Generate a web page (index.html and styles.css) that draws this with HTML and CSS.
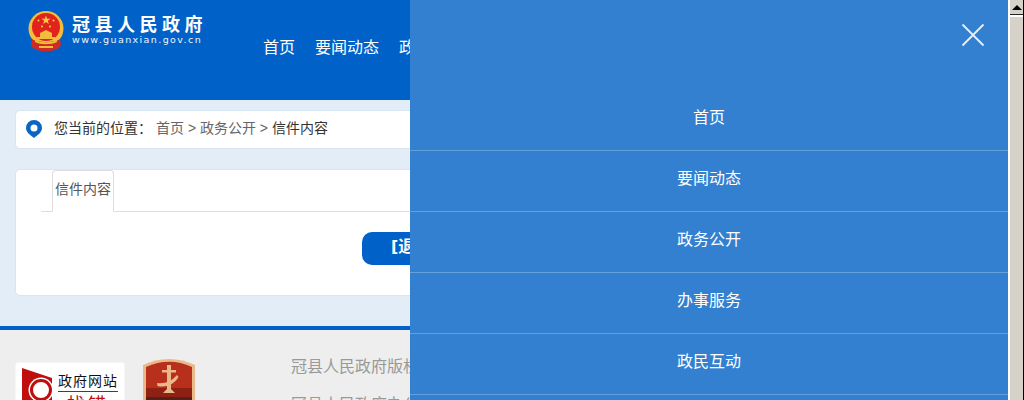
FILE: index.html
```html
<!DOCTYPE html>
<html lang="zh-CN">
<head>
	<meta charset="UTF-8">
	<title>冠县人民政府</title>
	<link rel="stylesheet" href="styles.css">
</head>
<body>
	<div class="page">
		<div class="header">
			<div class="logo">
				<svg class="emblem" width="36" height="40" viewBox="0 0 36 40">
					<circle cx="18" cy="17.5" r="17.5" fill="#f2bd3c"/>
					<circle cx="18" cy="16" r="14" fill="#e0241d"/>
					<path d="M18 4.5l1.1 3.3h3.5l-2.8 2 1 3.3-2.8-2-2.8 2 1-3.3-2.8-2h3.5z" fill="#f7cf4a"/>
					<circle cx="10.5" cy="9.5" r="1" fill="#f7cf4a"/>
					<circle cx="25.5" cy="9.5" r="1" fill="#f7cf4a"/>
					<circle cx="14" cy="15.5" r="1" fill="#f7cf4a"/>
					<circle cx="22" cy="15.5" r="1" fill="#f7cf4a"/>
					<path d="M9 26h18v2H9zM12 22l6-3 6 3v4H12z" fill="#f2bd3c"/>
					<path d="M4 28c4 4 24 4 28 0l1 6c-2 4-7 6-15 6S5 38 3 34z" fill="#cf2a24"/>
					<path d="M7 29c6 3 16 3 22 0v2c-6 3-16 3-22 0zM11 35h14v2H11z" fill="#f2bd3c"/>
				</svg>
				<div class="logo-text">
					<div class="logo-name">冠县人民政府</div>
					<div class="logo-url">www.guanxian.gov.cn</div>
				</div>
			</div>
			<ul class="nav">
				<li>首页</li>
				<li>要闻动态</li>
				<li>政务公开</li>
			</ul>
		</div>

		<div class="main">
			<div class="crumb">
				<svg class="pin" width="16" height="18" viewBox="0 0 16 18">
					<path fill-rule="evenodd" d="M8 0a8 8 0 0 1 8 8c0 4-4 7-8 10C4 15 0 12 0 8a8 8 0 0 1 8-8zm0 4.500a3.500 3.500 0 1 0 0 7 3.500 3.500 0 0 0 0-7z" fill="#0a66c2"/>
				</svg>
				<span class="crumb-label">您当前的位置：</span>
				<span class="crumb-link">首页 &gt; 政务公开 &gt;</span>
				<span class="crumb-now">信件内容</span>
			</div>
			<div class="card">
				<div class="tabs">
					<div class="tab">信件内容</div>
				</div>
				<div class="actions">
					<div class="back-btn">[退出]</div>
				</div>
			</div>
		</div>

		<div class="footer">
			<div class="badge-a">
				<svg class="badge-mark" width="38" height="38" viewBox="0 0 38 38">
					<path d="M0 0L30 10V38H0z" fill="#c00d0d"/>
					<circle cx="19" cy="22" r="12.5" fill="#fff"/>
					<circle cx="19" cy="22" r="9.500" fill="#fff" stroke="#c00d0d" stroke-width="3"/>
				</svg>
				<div class="badge-text">
					<div class="badge-top">政府网站</div>
					<div class="badge-bottom">找错</div>
				</div>
			</div>
			<svg class="badge-b" width="52" height="60" viewBox="0 0 52 60">
				<path d="M0 6C16-2 36-2 52 6V60H0z" fill="#e9b98a"/>
				<path d="M3 8C18 1 34 1 49 8V60H3z" fill="#b8301c"/>
				<rect x="3" y="29" width="46" height="9" fill="#8e2114"/>
				<rect x="3" y="38" width="46" height="22" fill="#52211a"/>
				<path d="M24 6h4v24l4 4H20l4-4zM19 11h14v2.500H19zM14 24c8 1 15-2 20-8l1.500 2c-4 7-12 11-21 9z" fill="#e9b98a"/>
			</svg>
			<div class="footer-info">
				<p>冠县人民政府版权所有</p>
				<p>冠县人民政府办公室</p>
			</div>
		</div>

		<div class="panel">
			<div class="panel-close">
				<svg width="24" height="24" viewBox="0 0 24 24">
					<path d="M1.500 1.500l21 21M22.500 1.500l-21 21" stroke="#e8f1fb" stroke-width="1.800" fill="none"/>
				</svg>
			</div>
			<ul class="panel-menu">
				<li>首页</li>
				<li>要闻动态</li>
				<li>政务公开</li>
				<li>办事服务</li>
				<li>政民互动</li>
			</ul>
		</div>
	</div>

	<div class="scrollbar">
		<div class="scroll-up"><span class="scroll-arrow"></span></div>
		<div class="scroll-thumb"></div>
	</div>
</body>
</html>
```

FILE: styles.css
```css
html, body {
	margin: 0;
	padding: 0;
}

body {
	font-family: "DejaVu Sans", "Noto Sans CJK SC", sans-serif;
	font-size: 14px;
	background: #eeeeee;
	height: 400px;
	overflow: hidden;
	display: flex;
}

ul {
	list-style: none;
	margin: 0;
	padding: 0;
}

.page {
	flex: 1;
	height: 400px;
	overflow: hidden;
	position: relative;
}

.header {
	height: 100px;
	background: #0062c8;
	display: flex;
	box-sizing: border-box;
	padding-left: 28px;
}

.logo {
	display: flex;
	gap: 8px;
	padding-top: 11px;
	width: 225px;
	align-items: flex-start;
}

.logo-name {
	color: #fff;
	font-weight: 700;
	font-size: 18px;
	line-height: 27px;
	letter-spacing: 4.5px;
	white-space: nowrap;
}

.logo-url {
	color: #eef4fc;
	font-size: 9.500px;
	line-height: 10px;
	letter-spacing: 1.400px;
	margin-top: -3px;
	white-space: nowrap;
}

.nav {
	display: flex;
	gap: 20px;
	padding-top: 36px;
	padding-left: 10px;
}

.nav li {
	color: #fff;
	font-size: 16px;
	line-height: 24px;
	white-space: nowrap;
}

.main {
	background: #e3edf8;
	padding: 10px 15px 31px;
	height: 226px;
	box-sizing: border-box;
}

.crumb {
	height: 39px;
	box-sizing: border-box;
	background: #fff;
	border: 1px solid #d9e5f3;
	border-radius: 5px;
	display: flex;
	align-items: center;
	padding: 0 0 6px 10px;
	color: #333;
	font-family: "Liberation Sans", "Noto Sans CJK SC", sans-serif;
	font-size: 14px;
}

.pin {
	margin: 5px 12px 0 0;
}

.crumb-label {
	margin-right: 4px;
}

.crumb-link {
	color: #666;
	margin-right: 4px;
}

.crumb-now {
	color: #333;
}

.card {
	margin-top: 20px;
	height: 127px;
	box-sizing: border-box;
	background: #fff;
	border: 1px solid #d9e5f3;
	border-radius: 5px;
}

.tabs {
	margin-left: 25px;
	height: 42px;
	box-sizing: border-box;
	border-bottom: 1px solid #ddd;
	padding-left: 11px;
}

.tab {
	width: 62px;
	height: 42px;
	box-sizing: border-box;
	border: 1px solid #ddd;
	border-bottom-color: #fff;
	border-radius: 4px 4px 0 0;
	background: #fff;
	color: #555;
	text-align: center;
	line-height: 36px;
	white-space: nowrap;
}

.actions {
	display: flex;
	justify-content: center;
	padding-top: 20px;
}

.back-btn {
	width: 284px;
	height: 33px;
	box-sizing: border-box;
	padding-left: 29px;
	background: #0062c8;
	border-radius: 10px;
	color: #fff;
	font-size: 16px;
	font-weight: 700;
	line-height: 30px;
}

.footer {
	border-top: 4px solid #0062c8;
	display: flex;
	align-items: flex-start;
	padding: 29px 0 0 15px;
}

.badge-a {
	width: 110px;
	height: 60px;
	margin-top: 3px;
	box-sizing: border-box;
	background: #fff;
	border: 1px solid #f6f6f6;
	border-radius: 3px;
	display: flex;
	padding: 5px 0 0 6px;
}

.badge-mark {
	flex: none;
	margin-right: -2px;
}

.badge-text {
	padding-top: 3px;
}

.badge-top {
	font-size: 14px;
	line-height: 20px;
	letter-spacing: 1px;
	color: #111;
	border-bottom: 1px solid #a01818;
	white-space: nowrap;
}

.badge-bottom {
	color: #c00d0d;
	font-size: 18px;
	line-height: 26px;
	letter-spacing: 3px;
	text-align: center;
	white-space: nowrap;
}

.badge-b {
	margin-left: 18px;
}

.footer-info {
	margin-left: 96px;
	color: #999;
	font-size: 16px;
	margin-top: -4px;
}

.footer-info p {
	margin: 0 0 14px;
	line-height: 24px;
	white-space: nowrap;
}

.panel {
	position: absolute;
	top: 0;
	left: 410px;
	right: 0;
	height: 400px;
	overflow: hidden;
	background: #3380d0;
}

.panel-close {
	display: flex;
	justify-content: flex-end;
	height: 90px;
	box-sizing: border-box;
	padding: 23px 23px 0 0;
}

.panel-menu li {
	height: 61px;
	box-sizing: border-box;
	border-bottom: 1px solid rgba(255, 255, 255, 0.25);
	color: #fff;
	font-size: 16px;
	line-height: 55px;
	text-align: center;
}

.scrollbar {
	width: 16px;
	height: 400px;
	box-sizing: border-box;
	flex: none;
	background: #fff;
	border-right: 1px solid #000;
	padding-left: 2px;
}

.scroll-up {
	height: 15px;
	background: #d6d2ca;
	border-bottom: 1px solid #222;
	display: flex;
	justify-content: center;
	padding-top: 5px;
	box-sizing: border-box;
}

.scroll-arrow {
	width: 0;
	height: 0;
	border-left: 5px solid transparent;
	border-right: 5px solid transparent;
	border-bottom: 5px solid #000;
}

.scroll-thumb {
	height: 383px;
	margin-top: 2px;
	background: #d6d2ca;
}
```
